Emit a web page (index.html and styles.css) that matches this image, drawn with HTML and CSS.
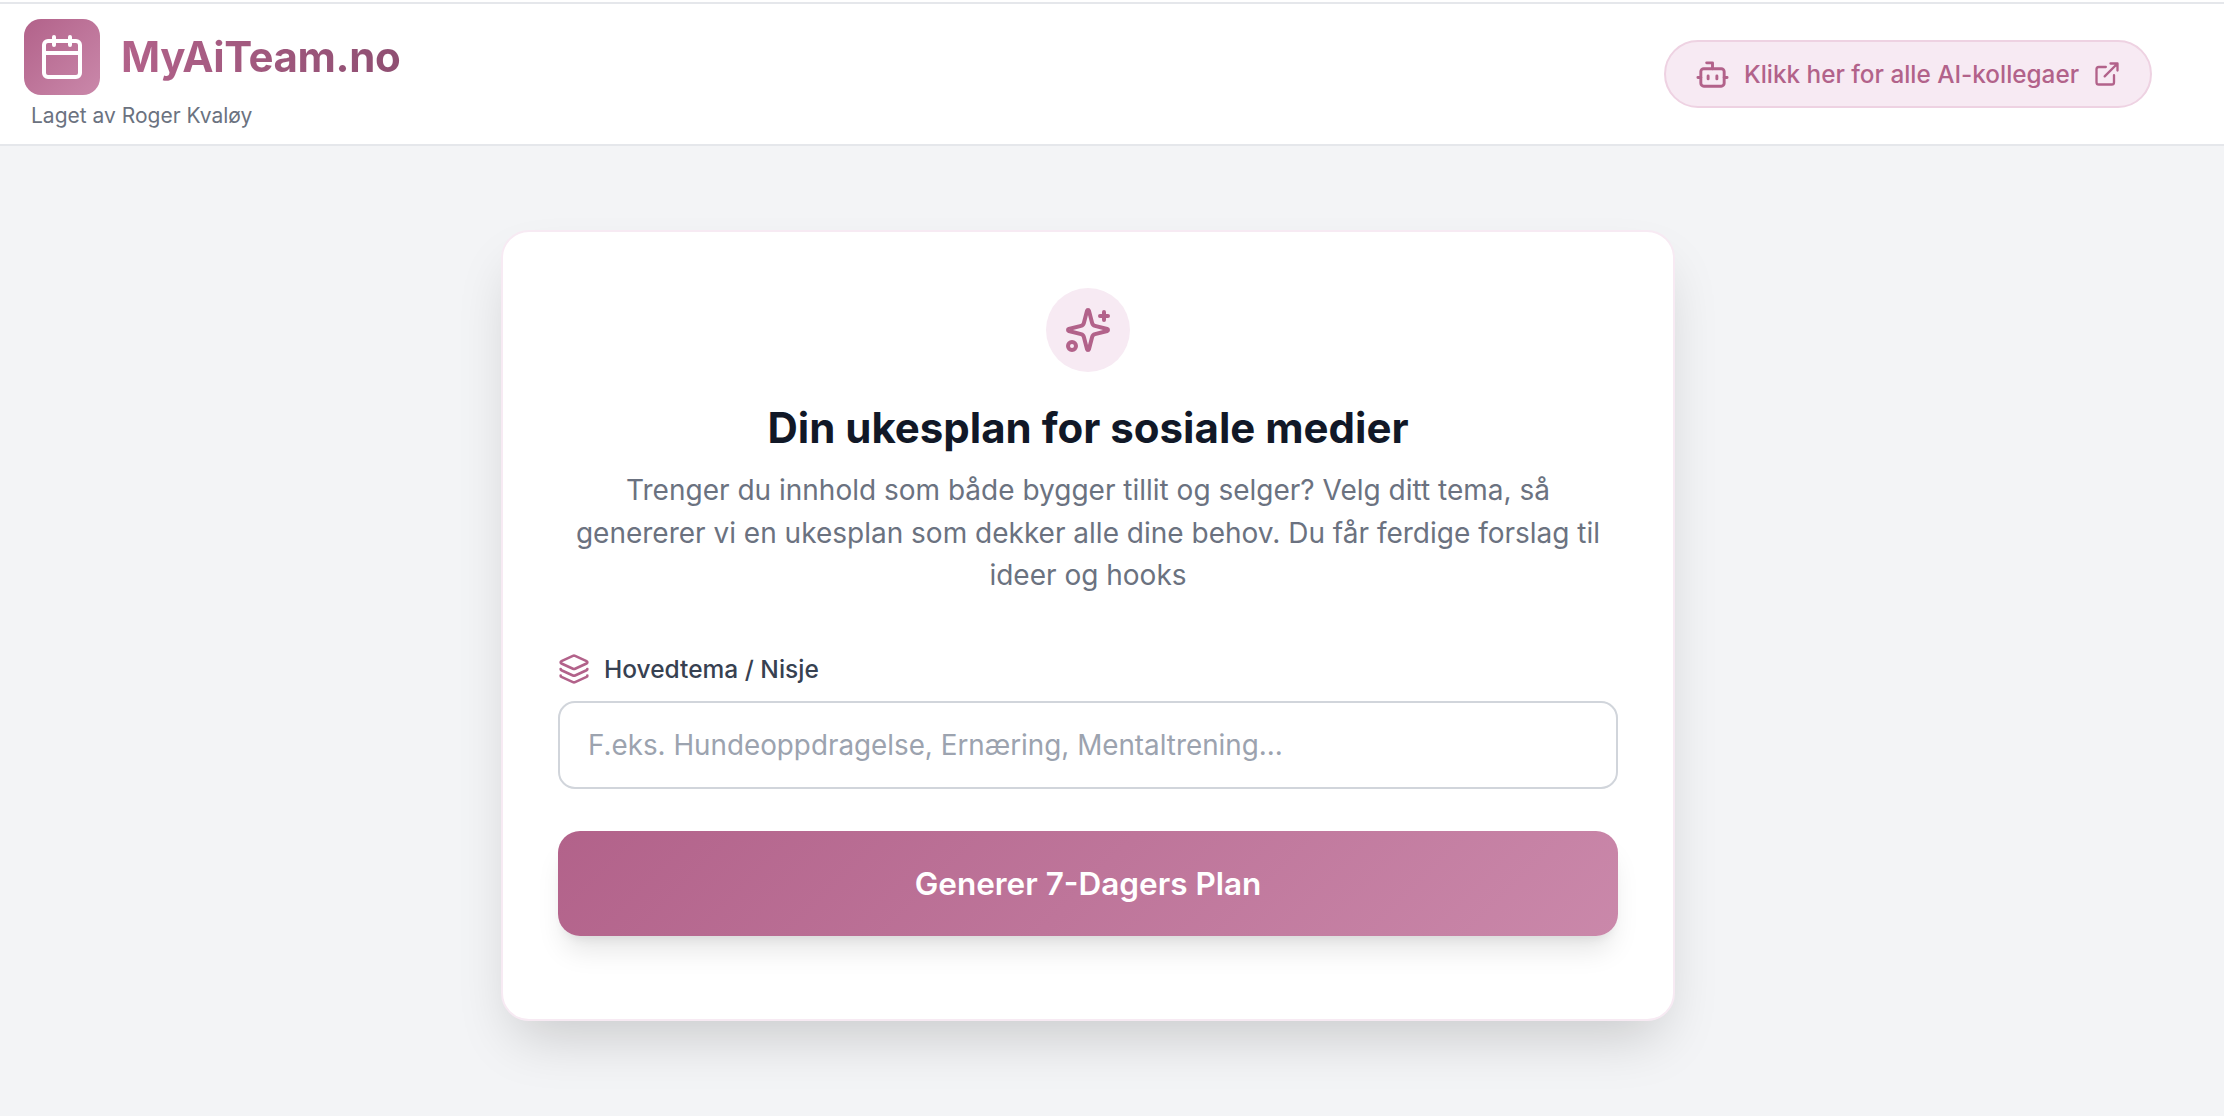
FILE: index.html
```html
<!DOCTYPE html>
<html lang="no">
<head>
    <meta charset="UTF-8">
    <meta name="viewport" content="width=device-width, initial-scale=1.0">
    <title>MyAiTeam.no</title>
    <link rel="stylesheet" href="styles.css">
</head>
<body>
    <header class="topbar">
        <div class="brand">
            <div class="brand-row">
                <div class="brand-logo">
                    <svg viewBox="0 0 24 24" class="ico-logo"><rect x="3" y="4" width="18" height="18" rx="2"/><path d="M16 2v4M8 2v4M3 10h18"/></svg>
                </div>
                <span class="brand-name">MyAiTeam.no</span>
            </div>
            <p class="brand-by">Laget av Roger Kvaløy</p>
        </div>
        <a class="team-link" href="#">
            <svg viewBox="0 0 24 24" class="ico-bot"><path d="M12 8V4H8"/><rect x="4" y="8" width="16" height="12" rx="2"/><path d="M2 14h2M20 14h2M15 13v2M9 13v2"/></svg>
            <span>Klikk her for alle AI-kollegaer</span>
            <svg viewBox="0 0 24 24" class="ico-ext"><path d="M15 3h6v6M10 14 21 3M18 13v6a2 2 0 0 1-2 2H5a2 2 0 0 1-2-2V8a2 2 0 0 1 2-2h6"/></svg>
        </a>
    </header>

    <main class="content">
        <section class="card">
            <div class="card-badge">
                <svg viewBox="0 0 24 24" class="ico-spark"><path d="M9.937 15.5A2 2 0 0 0 8.5 14.063l-6.135-1.582a.5.5 0 0 1 0-.962L8.5 9.936A2 2 0 0 0 9.937 8.5l1.582-6.135a.5.5 0 0 1 .963 0L14.063 8.5A2 2 0 0 0 15.5 9.937l6.135 1.581a.5.5 0 0 1 0 .964L15.5 14.063a2 2 0 0 0-1.437 1.437l-1.582 6.135a.5.5 0 0 1-.963 0z"/><path d="M20 3v4M22 5h-4"/><circle cx="4" cy="20" r="2"/></svg>
            </div>
            <h1>Din ukesplan for sosiale medier</h1>
            <p class="lead">Trenger du innhold som både bygger tillit og selger? Velg ditt tema, så genererer vi en ukesplan som dekker alle dine behov. Du får ferdige forslag til ideer og hooks</p>

            <form class="plan-form">
                <label class="field-label" for="tema">
                    <svg viewBox="0 0 24 24" class="ico-layers"><path d="M12.83 2.18a2 2 0 0 0-1.66 0L2.6 6.08a1 1 0 0 0 0 1.83l8.58 3.91a2 2 0 0 0 1.66 0l8.58-3.9a1 1 0 0 0 0-1.83z"/><path d="M2 12a1 1 0 0 0 .58.91l8.6 3.91a2 2 0 0 0 1.65 0l8.58-3.9A1 1 0 0 0 22 12"/><path d="M2 17a1 1 0 0 0 .58.91l8.6 3.91a2 2 0 0 0 1.65 0l8.58-3.9A1 1 0 0 0 22 17"/></svg>
                    Hovedtema / Nisje
                </label>
                <input id="tema" type="text" placeholder="F.eks. Hundeoppdragelse, Ernæring, Mentaltrening...">
                <button type="button">Generer 7-Dagers Plan</button>
            </form>
        </section>
    </main>
</body>
</html>
```

FILE: styles.css
```css
:root {
    --rosa: #b2628a;
    --rosa-lys: #ca88aa;
    --rosa-bg: #f7eaf3;
    --rosa-kant: #eed2e2;
    --fundo: #f3f4f6;
    --kant: #e5e7eb;
}

* {
    box-sizing: border-box;
}

body {
    margin: 0;
    height: 1116px;
    overflow: hidden;
    background-color: var(--fundo);
    font-family: 'Inter', sans-serif;
}

svg {
    fill: none;
    stroke: currentColor;
    stroke-linecap: round;
    stroke-linejoin: round;
    flex-shrink: 0;
}

.topbar {
    height: 146px;
    background: white;
    border-top: 2px solid white;
    box-shadow: inset 0 2px 0 var(--kant);
    border-bottom: 2px solid var(--kant);
    padding: 17px 72px 0 24px;
    display: flex;
    justify-content: space-between;
}

.brand-row {
    display: flex;
    align-items: center;
    gap: 21px;
}

.brand-logo {
    width: 76px;
    height: 76px;
    border-radius: 17px;
    background: linear-gradient(135deg, var(--rosa), var(--rosa-lys));
    color: white;
    display: flex;
    align-items: center;
    justify-content: center;
}

.ico-logo {
    width: 48px;
    height: 48px;
    stroke-width: 2;
}

.brand-name {
    font-size: 42px;
    font-weight: 700;
    letter-spacing: -0.4px;
    padding-bottom: 2px;
    background: linear-gradient(90deg, #b2628a, #8f4f72);
    -webkit-background-clip: text;
    background-clip: text;
    color: transparent;
}

.brand-by {
    margin: 7px 0 0 7px;
    font-size: 21px;
    line-height: 28px;
    color: #6b7280;
}

.team-link {
    margin-top: 21px;
    height: 68px;
    width: 488px;
    border: 2px solid var(--rosa-kant);
    border-radius: 34px;
    background: var(--rosa-bg);
    color: var(--rosa);
    font-size: 24.3px;
    font-weight: 500;
    text-decoration: none;
    display: flex;
    align-items: center;
    justify-content: center;
    gap: 14px;
}

.ico-bot {
    width: 35px;
    height: 35px;
    stroke-width: 2;
}

.ico-ext {
    width: 28px;
    height: 28px;
    stroke-width: 2;
}

/* the card sits off centre in the window: it is centred on x = 1088 */
.content {
    display: flex;
    justify-content: center;
    padding: 84px 48px 0 0;
}

.card {
    width: 1174px;
    height: 791px;
    background: white;
    border: 2px solid var(--rosa-bg);
    border-radius: 28px;
    padding: 56px 55px 55px;
    box-shadow: 0 28px 56px -14px rgba(0, 0, 0, 0.18);
    text-align: center;
}

.card-badge {
    width: 84px;
    height: 84px;
    margin: 0 auto 30px;
    border-radius: 50%;
    background: var(--rosa-bg);
    color: var(--rosa);
    display: flex;
    align-items: center;
    justify-content: center;
}

.ico-spark {
    width: 48px;
    height: 48px;
    stroke-width: 2;
}

h1 {
    margin: 0 0 15px;
    font-size: 42px;
    line-height: 52px;
    font-weight: 700;
    color: #111827;
}

.lead {
    margin: 0 auto;
    width: 1040px;
    font-size: 28px;
    line-height: 42.5px;
    color: #6b7280;
}

.plan-form {
    margin-top: 56px;
    text-align: left;
}

.field-label {
    display: flex;
    align-items: center;
    gap: 14px;
    font-size: 24.5px;
    font-weight: 500;
    color: #374151;
    margin-bottom: 16px;
}

.ico-layers {
    width: 32px;
    height: 32px;
    stroke-width: 2;
    color: var(--rosa);
}

input {
    display: block;
    width: 100%;
    height: 88px;
    padding: 0 28px;
    border: 2.5px solid #d1d5db;
    border-radius: 17px;
    font-family: inherit;
    font-size: 27.8px;
    outline: none;
}

input::placeholder {
    color: #9ca3af;
}

button {
    display: block;
    width: 100%;
    height: 105px;
    margin-top: 42px;
    border: none;
    border-radius: 22px;
    background: linear-gradient(135deg, var(--rosa), var(--rosa-lys));
    color: white;
    font-family: inherit;
    font-size: 31.5px;
    font-weight: 600;
    box-shadow: 0 20px 28px -6px rgba(0, 0, 0, 0.1), 0 8px 11px -6px rgba(0, 0, 0, 0.08);
}
```
